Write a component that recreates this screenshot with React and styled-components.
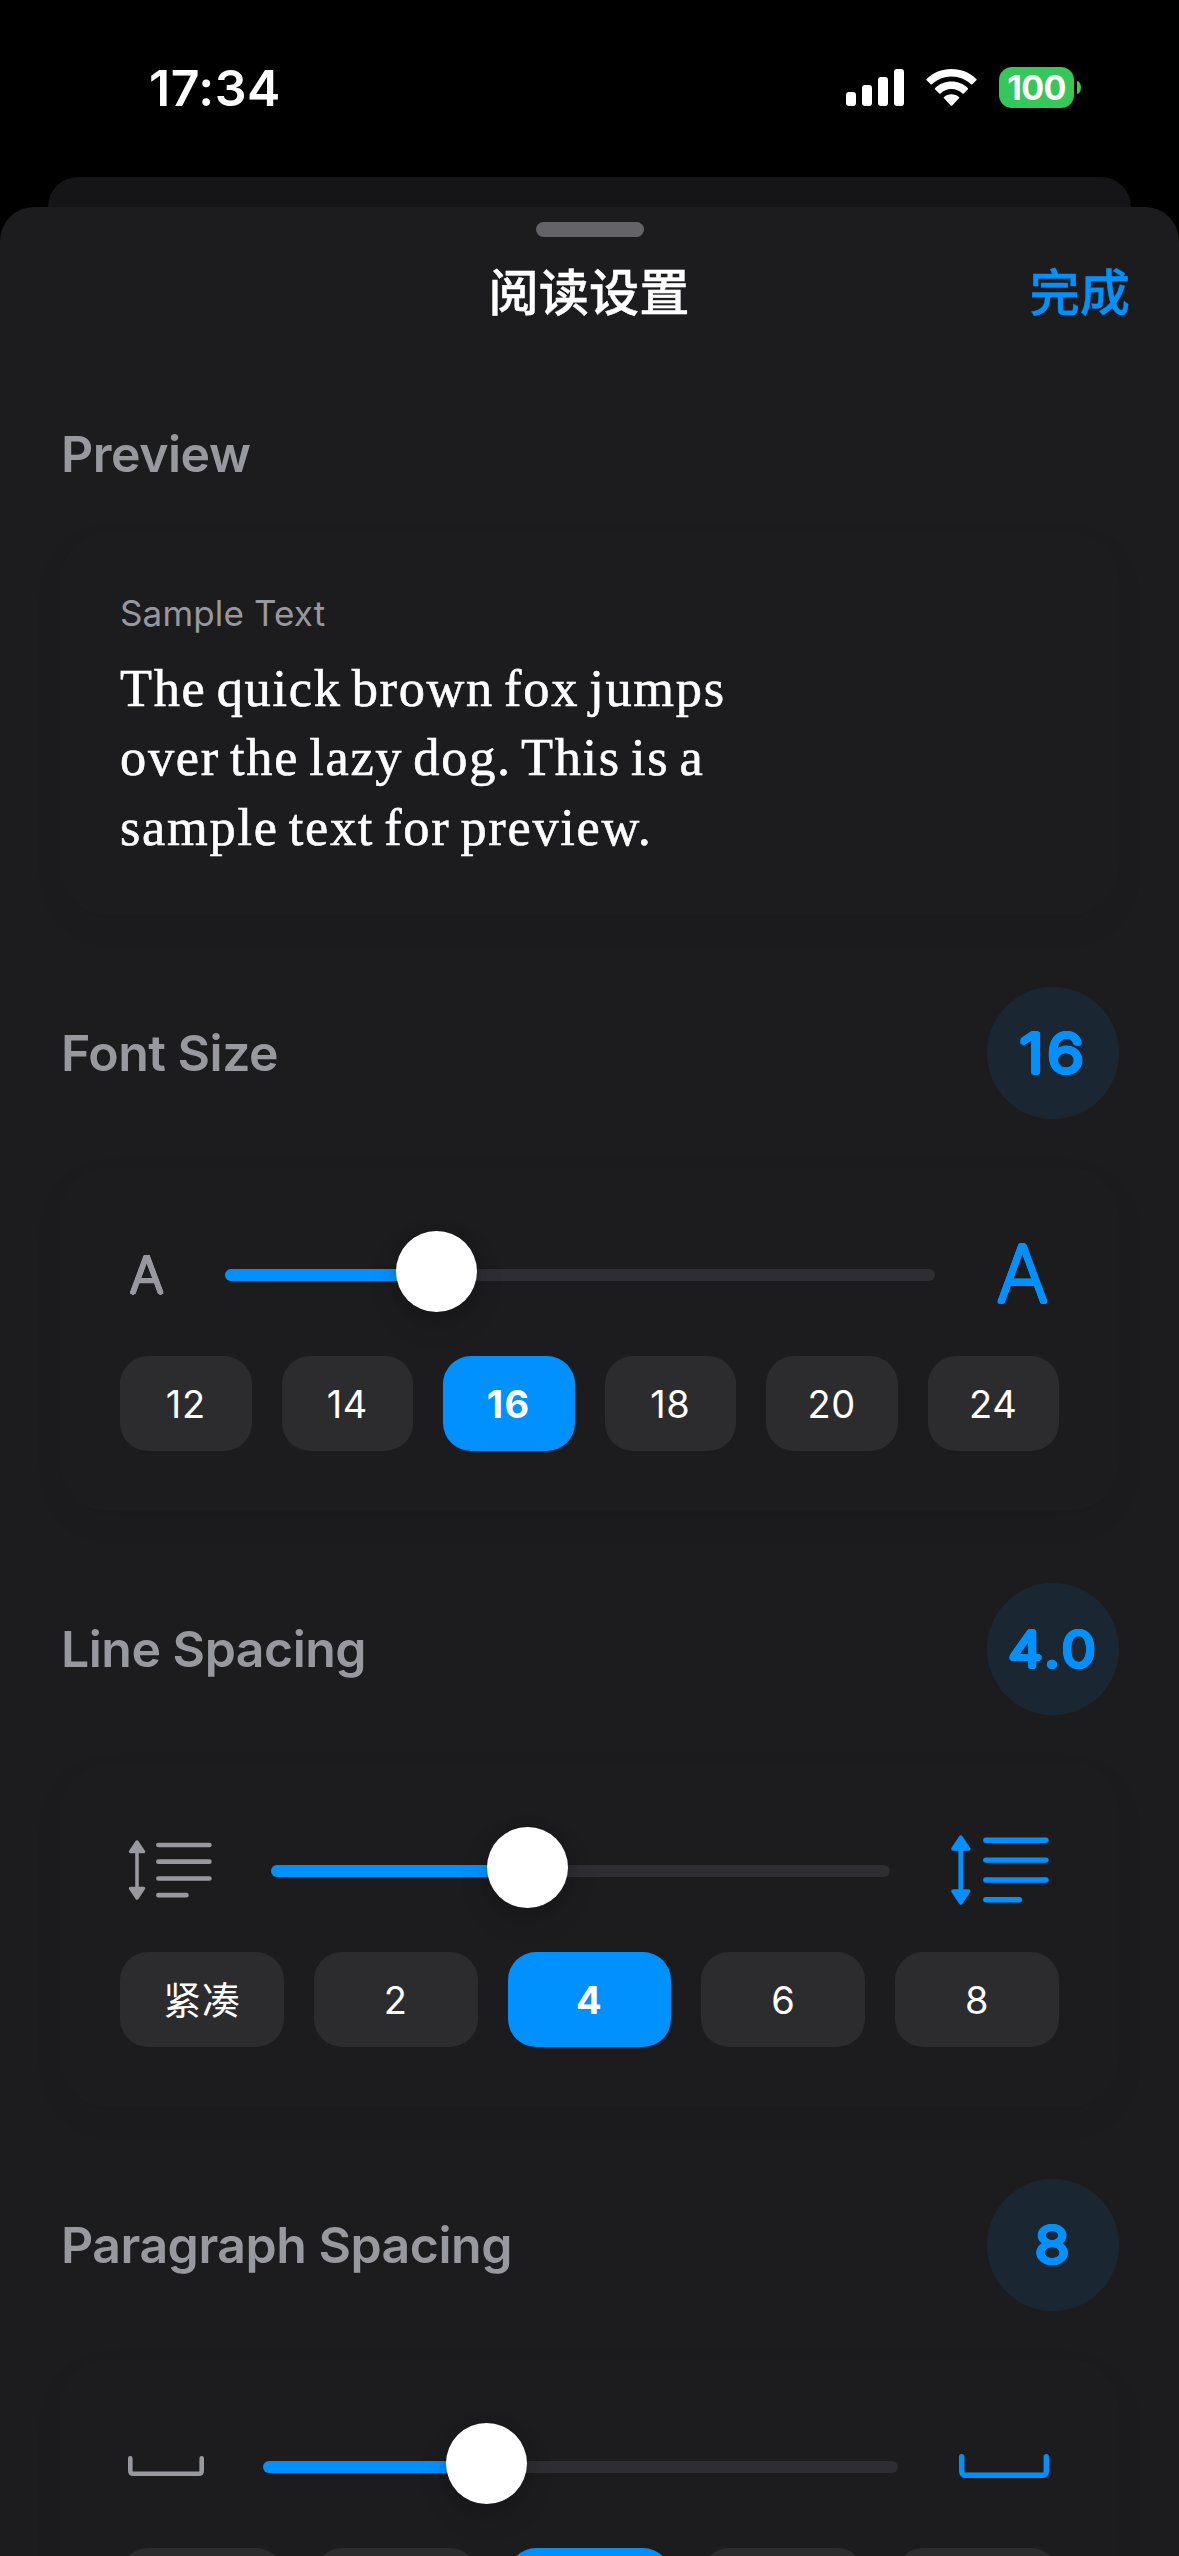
import React from "react";
import styled, { createGlobalStyle, css } from "styled-components";

const color = {
  sheet: "#1c1c1e",
  back: "#151517",
  accent: "#0091ff",
  secondary: "#98989f",
  fill: "#2c2c2e",
  track: "#2d2d32",
};

const GlobalStyle = createGlobalStyle`
  * { box-sizing: border-box; }
  body {
    margin: 0;
    background: #000;
    color: #fff;
    font-family: Inter, "Noto Sans CJK SC", sans-serif;
  }
`;

const Screen = styled.div`
  width: 1179px;
  height: 2556px;
  overflow: hidden;
  display: flex;
  flex-direction: column;
`;

const StatusBar = styled.header`
  height: 177px;
  padding: 58px 98px 0 149px;
  display: flex;
  justify-content: space-between;
  align-items: flex-start;
`;

const Clock = styled.div`
  font-size: 50px;
  line-height: 60px;
  font-weight: 600;
  letter-spacing: 0.5px;
`;

const StatusIcons = styled.div`
  display: flex;
  align-items: center;
  margin-top: 9px;
`;

const Signal = styled.svg`
  display: block;
  margin-right: 22px;
`;

const Wifi = styled.svg`
  display: block;
  margin-right: 22px;
`;

const Battery = styled.div`
  width: 75px;
  height: 41px;
  border-radius: 13px;
  background: #34c759;
  display: flex;
  align-items: center;
  justify-content: center;
  font-size: 34px;
  font-weight: 700;
  line-height: 41px;
  letter-spacing: -0.6px;
`;

const BatteryTip = styled.div`
  width: 4px;
  height: 13px;
  margin-left: 3px;
  border-radius: 0 4px 4px 0 / 0 6.5px 6.5px 0;
  background: #34c759;
`;

const BackSheet = styled.div`
  flex: none;
  height: 30px;
  margin: 0 48px;
  border-radius: 30px 30px 0 0;
  background: ${color.back};
`;

const Sheet = styled.main`
  flex: none;
  height: 2349px;
  overflow: hidden;
  border-radius: 34px 34px 0 0;
  background: ${color.sheet};
  padding-top: 15px;
`;

const Grabber = styled.div`
  width: 108px;
  height: 15px;
  margin: 0 auto;
  border-radius: 7.5px;
  background: #636368;
`;

const NavBar = styled.nav`
  height: 108px;
  padding: 3px 49px 0;
  display: grid;
  grid-template-columns: 1fr auto 1fr;
  align-items: center;
  font-size: 50.2px;
  line-height: 60px;
`;

const NavTitle = styled.h1`
  grid-column: 2;
  margin: 0 1px 0 0;
  font-size: inherit;
  font-weight: 500;
  -webkit-text-stroke: 0.4px currentColor;
`;

const DoneButton = styled.button`
  justify-self: end;
  padding: 0;
  border: 0;
  background: none;
  color: ${color.accent};
  font: inherit;
  font-weight: 500;
  -webkit-text-stroke: 0.4px currentColor;
`;

const Content = styled.div`
  padding: 79px 60px 0;
  display: flex;
  flex-direction: column;
  gap: 72px;
`;

const Section = styled.section`
  display: flex;
  flex-direction: column;
  gap: 48px;
`;

const SectionHeader = styled.div`
  display: flex;
  align-items: center;
  justify-content: space-between;
  min-height: 60px;
`;

const SectionTitle = styled.h2`
  margin: 0;
  padding-left: 1px;
  color: ${color.secondary};
  font-size: 50px;
  line-height: 60px;
  font-weight: 600;
  letter-spacing: -0.5px;
`;

/* Thickens thin glyphs evenly in every direction, which rounds their ends. */
const spread = (r) =>
  Array.from({ length: 16 }, (_, i) => {
    const a = (i * Math.PI) / 8;
    return `${(r * Math.cos(a)).toFixed(2)}px ${(r * Math.sin(a)).toFixed(2)}px 0 currentColor`;
  }).join(", ");

const rounded = css`
  text-shadow: ${({ $spread }) => spread($spread)};
`;

const Badge = styled.div`
  width: 132px;
  height: 132px;
  border-radius: 50%;
  display: flex;
  align-items: center;
  justify-content: center;
  background: #1a2733;
  color: ${color.accent};
`;

const BadgeValue = styled.span`
  font-size: ${({ $size }) => $size}px;
  font-weight: 300;
  letter-spacing: 3px;
  text-indent: 1px;
  line-height: 1;
  transform: scaleX(1.12);
  ${rounded}
`;

const Card = styled.div`
  border-radius: 48px;
  background: ${color.sheet};
  box-shadow: 0 12px 30px rgba(0, 0, 0, 0.06);
  padding: 60px;
`;

const SampleLabel = styled.div`
  color: ${color.secondary};
  font-size: 35px;
  line-height: 43px;
  letter-spacing: 0.15px;
`;

const SampleText = styled.p`
  margin: 18.5px 0 -7px;
  font-family: "Liberation Serif", serif;
  font-size: 52.4px;
  line-height: 69.5px;
  letter-spacing: 1.7px;
  word-spacing: -4.7px;
  white-space: pre-line;
  -webkit-text-stroke: 0.6px currentColor;
`;

const SliderRow = styled.div`
  height: 93px;
  display: flex;
  align-items: center;
  gap: 48px;
`;

const IconBox = styled.div`
  flex: none;
  width: ${({ $width }) => $width}px;
  height: 93px;
  padding: ${({ $end }) => ($end ? "0 10px 0 0" : "0 0 0 8px")};
  display: flex;
  align-items: center;
  justify-content: ${({ $end }) => ($end ? "flex-end" : "flex-start")};
  color: ${({ $end }) => ($end ? color.accent : color.secondary)};
`;

const LetterIcon = styled.span`
  padding: 1px 1px 0 2px;
  font-size: ${({ $size }) => $size}px;
  font-weight: 200;
  line-height: 1;
  ${rounded}
`;

const Track = styled.div`
  flex: 1;
  height: 12px;
  margin-top: 3px;
  border-radius: 6px;
  display: flex;
  align-items: center;
  background: ${color.track};
`;

const TrackFill = styled.div`
  flex: none;
  height: 12px;
  border-radius: 6px 0 0 6px;
  background: ${color.accent};
`;

const Thumb = styled.div`
  flex: none;
  width: 81px;
  height: 81px;
  margin: -7px 0 0 -41px;
  border-radius: 50%;
  background: #fff;
  box-shadow: 0 12px 30px rgba(0, 0, 0, 0.14), 0 0 12px rgba(0, 0, 0, 0.12);
`;

const Presets = styled.div`
  margin-top: 36px;
  display: flex;
  gap: 30px;
`;

const Preset = styled.button`
  flex: 1 1 0;
  height: 95px;
  padding: 0;
  border: 0;
  border-radius: 28px;
  background: ${({ $active }) => ($active ? color.accent : color.fill)};
  color: #fff;
  font-family: inherit;
  font-size: 38px;
  line-height: 48px;
  font-weight: ${({ $active }) => ($active ? 700 : 400)};
  letter-spacing: ${({ $active }) => ($active ? "1.5px" : "0.6px")};
`;

const SignalIcon = () => (
  <Signal width="58" height="37" viewBox="0 0 58 37" fill="#fff">
    <rect x="0" y="23" width="10" height="14" rx="3" />
    <rect x="16" y="16" width="10" height="21" rx="3" />
    <rect x="32" y="8" width="10" height="29" rx="3" />
    <rect x="48" y="0" width="10" height="37" rx="3" />
  </Signal>
);

const WifiIcon = () => (
  <Wifi width="51" height="37" viewBox="0 0 51 37" fill="#fff">
    <path d="M25.5 0C35.2 0 44 3.700 50.400 9.900c.4.4.4 1 0 1.400l-4 3.900c-.4.4-1 .4-1.400 0C39.800 10.300 33 7.400 25.500 7.400S11.200 10.300 6 15.200c-.4.4-1 .4-1.400 0L.6 11.300c-.4-.4-.4-1 0-1.400C7 3.700 15.800 0 25.500 0Z" />
    <path d="M25.500 12.600c6.300 0 12 2.400 16.300 6.400.4.4.4 1 0 1.400l-4 4c-.4.4-1 .4-1.400 0-2.900-2.600-6.700-4.400-10.900-4.400s-8 1.800-10.900 4.400c-.4.4-1 .4-1.400 0l-4-4c-.4-.4-.4-1 0-1.400 4.300-4 10-6.400 16.300-6.400Z" />
    <path d="M25.500 25.200c2.800 0 5.400 1 7.400 2.700.5.400.5 1 .1 1.400l-6.700 7.100c-.4.5-1.200.5-1.600 0L18 29.300c-.4-.4-.4-1 .1-1.400 2-1.700 4.600-2.700 7.400-2.700Z" />
  </Wifi>
);

const LinesSmallIcon = () => (
  <svg width="84" height="60" viewBox="0 0 84 60" fill="none" stroke="currentColor" strokeLinecap="round" strokeLinejoin="round">
    <path d="M9 8v44" strokeWidth="3.600" />
    <path d="M9 2l6.500 9.600h-13zM9 58l6.500-9.600h-13z" strokeWidth="3.400" fill="currentColor" />
    <path d="M30.400 5h51M30.400 21.700h51M30.400 38.500h51M30.400 55.200h28" strokeWidth="4.700" />
  </svg>
);

const LinesLargeIcon = () => (
  <svg width="98" height="70" viewBox="0 0 98 70" fill="none" stroke="currentColor" strokeLinecap="round" strokeLinejoin="round">
    <path d="M9.800 9v52" strokeWidth="4.800" />
    <path d="M9.800 2.200l7.700 11.600H2.100zM9.800 67.800l7.700-11.600H2.100z" strokeWidth="3.800" fill="currentColor" />
    <path d="M34.800 5.300h60.200M34.800 25.100h60.200M34.800 45h60.200M34.800 64.800h33.500" strokeWidth="5.400" />
  </svg>
);

const SpaceSmallIcon = () => (
  <svg width="76" height="20" viewBox="0 0 76 20" fill="none" stroke="currentColor" strokeWidth="4.600" strokeLinecap="round">
    <path d="M2.300 2.300v12.400q0 3 3 3h65.400q3 0 3-3V2.300" />
  </svg>
);

const SpaceLargeIcon = () => (
  <svg width="90" height="24" viewBox="0 0 90 24" fill="none" stroke="currentColor" strokeWidth="5.400" strokeLinecap="round">
    <path d="M2.700 2.700v14.200q0 4.400 4.400 4.400h75.800q4.400 0 4.400-4.400V2.700" />
  </svg>
);

const settings = [
  {
    title: "Font Size",
    value: "16",
    badgeSize: 55,
    startWidth: 57,
    endWidth: 76,
    start: <LetterIcon $size={51} $spread={1.5}>A</LetterIcon>,
    end: <LetterIcon $size={78} $spread={1.8}>A</LetterIcon>,
    fill: 211.5,
    presets: ["12", "14", "16", "18", "20", "24"],
    active: 2,
  },
  {
    title: "Line Spacing",
    value: "4.0",
    badgeSize: 49,
    startWidth: 103,
    endWidth: 121,
    start: <LinesSmallIcon />,
    end: <LinesLargeIcon />,
    fill: 256.5,
    presets: ["紧凑", "2", "4", "6", "8"],
    active: 2,
  },
  {
    title: "Paragraph Spacing",
    value: "8",
    badgeSize: 50,
    startWidth: 95,
    endWidth: 113,
    start: <SpaceSmallIcon />,
    end: <SpaceLargeIcon />,
    fill: 223.5,
    presets: ["", "", "", "", ""],
    active: 2,
  },
];

function SettingSection({ item }) {
  return (
    <Section>
      <SectionHeader>
        <SectionTitle>{item.title}</SectionTitle>
        <Badge>
          <BadgeValue $size={item.badgeSize} $spread={2}>{item.value}</BadgeValue>
        </Badge>
      </SectionHeader>
      <Card>
        <SliderRow>
          <IconBox $width={item.startWidth}>{item.start}</IconBox>
          <Track>
            <TrackFill style={{ width: item.fill }} />
            <Thumb />
          </Track>
          <IconBox $width={item.endWidth} $end>{item.end}</IconBox>
        </SliderRow>
        <Presets>
          {item.presets.map((label, i) => (
            <Preset key={i} $active={i === item.active}>{label}</Preset>
          ))}
        </Presets>
      </Card>
    </Section>
  );
}

export default function App() {
  return (
    <>
      <GlobalStyle />
      <Screen>
        <StatusBar>
          <Clock>17:34</Clock>
          <StatusIcons>
            <SignalIcon />
            <WifiIcon />
            <Battery>100</Battery>
            <BatteryTip />
          </StatusIcons>
        </StatusBar>
        <BackSheet />
        <Sheet>
          <Grabber />
          <NavBar>
            <NavTitle>阅读设置</NavTitle>
            <DoneButton>完成</DoneButton>
          </NavBar>
          <Content>
            <Section>
              <SectionHeader>
                <SectionTitle>Preview</SectionTitle>
              </SectionHeader>
              <Card>
                <SampleLabel>Sample Text</SampleLabel>
                <SampleText>
                  {"The quick brown fox jumps\nover the lazy dog. This is a\nsample text for preview."}
                </SampleText>
              </Card>
            </Section>
            {settings.map((item) => (
              <SettingSection key={item.title} item={item} />
            ))}
          </Content>
        </Sheet>
      </Screen>
    </>
  );
}
